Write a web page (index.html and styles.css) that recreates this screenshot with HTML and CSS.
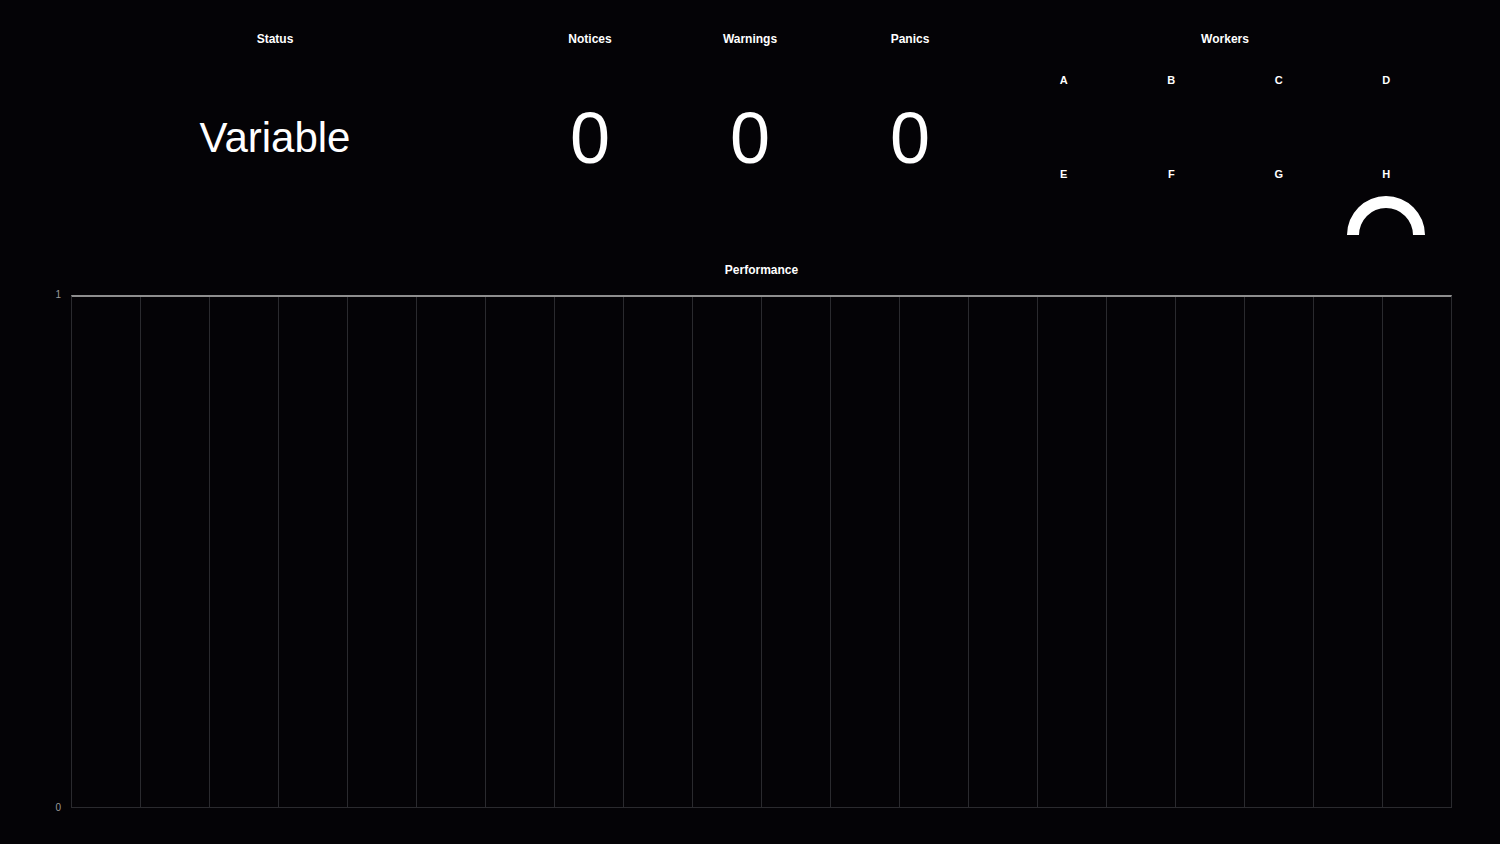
FILE: index.html
```html
<!DOCTYPE html>
<html lang="en">
<head>
  <meta charset="UTF-8" />
  <meta name="viewport" content="width=device-width, initial-scale=1.0" />
  <title>Dashboard</title>
  <link rel="stylesheet" href="styles.css">
</head>
<body>
  <main class="dash">
    <section class="top">
      <div class="panel">
        <h2>Status</h2>
        <div class="value word">Variable</div>
      </div>
      <div class="panel">
        <h2>Notices</h2>
        <div class="value num">0</div>
      </div>
      <div class="panel">
        <h2>Warnings</h2>
        <div class="value num">0</div>
      </div>
      <div class="panel">
        <h2>Panics</h2>
        <div class="value num">0</div>
      </div>
      <div class="panel">
        <h2>Workers</h2>
        <div class="worker-grid">
          <div class="worker"><span>A</span><svg class="gauge" viewBox="0 0 80 40"></svg></div>
          <div class="worker"><span>B</span><svg class="gauge" viewBox="0 0 80 40"></svg></div>
          <div class="worker"><span>C</span><svg class="gauge" viewBox="0 0 80 40"></svg></div>
          <div class="worker"><span>D</span><svg class="gauge" viewBox="0 0 80 40"></svg></div>
          <div class="worker"><span>E</span><svg class="gauge" viewBox="0 0 80 40"></svg></div>
          <div class="worker"><span>F</span><svg class="gauge" viewBox="0 0 80 40"></svg></div>
          <div class="worker"><span>G</span><svg class="gauge" viewBox="0 0 80 40"></svg></div>
          <div class="worker">
            <span>H</span>
            <svg class="gauge" viewBox="0 0 80 40">
              <path d="M1 40 A39 39 0 0 1 79 40 L67 40 A27 27 0 0 0 13 40 Z" fill="#fff" />
            </svg>
          </div>
        </div>
      </div>
    </section>

    <section class="chart">
      <div></div>
      <h2>Performance</h2>
      <div class="axis"><span>1</span><span>0</span></div>
      <div class="plot"></div>
    </section>
  </main>
</body>
</html>
```

FILE: styles.css
```css
body {
  margin: 0;
  background-color: #040306;
  color: #fff;
  font-family: "Liberation Sans", Arial, sans-serif;
}
h2 {
  margin: 0;
  font-size: 12px;
  line-height: 16px;
  font-weight: bold;
  text-align: center;
}
.top {
  display: grid;
  grid-template-columns: 470px 160px 160px 160px 470px;
  padding: 31px 40px 0;
  height: 219px;
}
.value {
  height: 182px;
  display: flex;
  align-items: center;
  justify-content: center;
}
.word {
  font-size: 42px;
}
.num {
  font-size: 72px;
}
.worker-grid {
  display: grid;
  grid-template-columns: repeat(4, 1fr);
  row-gap: 25px;
  padding: 0 20px;
  margin-top: 25px;
}
.worker {
  display: flex;
  flex-direction: column;
  align-items: center;
}
.worker span {
  font-size: 11px;
  font-weight: bold;
  line-height: 16px;
}
.gauge {
  width: 80px;
  height: 40px;
  margin-top: 13px;
}
.chart {
  display: grid;
  grid-template-columns: 31px 1381px;
  row-gap: 17px;
  padding: 12px 0 30px 40px;
}
.axis {
  display: flex;
  flex-direction: column;
  justify-content: space-between;
  align-items: flex-end;
  align-self: start;
  height: 525px;
  margin-top: -6px;
  padding-right: 10px;
  box-sizing: border-box;
  font-size: 10px;
  line-height: 12px;
  color: #9a9a9a;
}
.plot {
  box-sizing: border-box;
  height: 513px;
  border: 1px solid #2a2a2e;
  border-top: 2px solid #8e8e8e;
  background-image: repeating-linear-gradient(to right, transparent 0 68px, #2a2a2e 68px 69px);
}
```
